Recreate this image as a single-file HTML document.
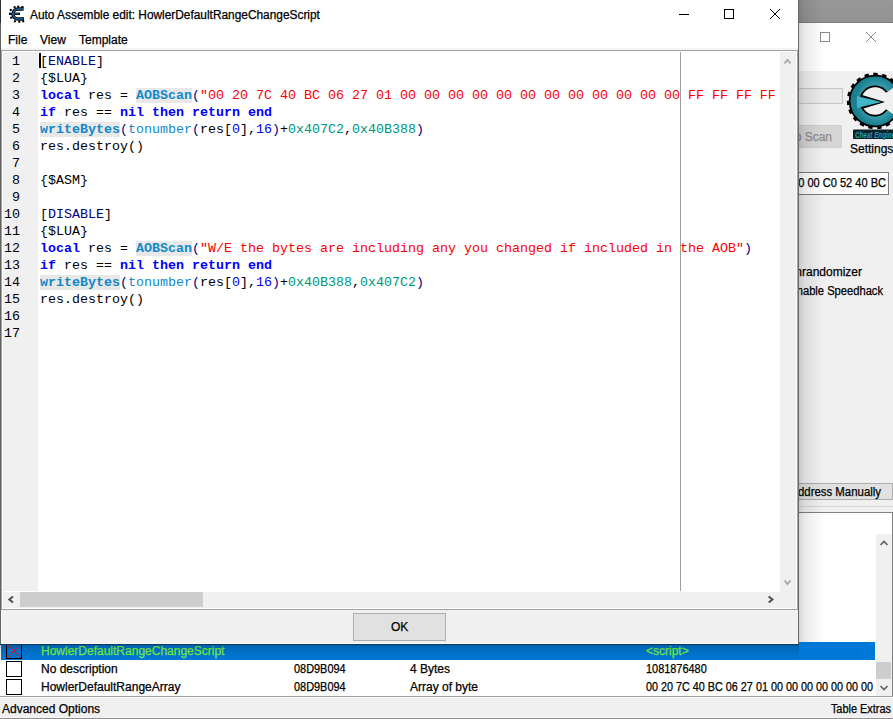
<!DOCTYPE html>
<html><head><meta charset="utf-8">
<style>
*{margin:0;padding:0;box-sizing:border-box}
html,body{width:893px;height:719px;overflow:hidden;background:#f0f0f0;position:relative}
body{font-family:"Liberation Sans",sans-serif;font-size:12px;color:#000}
.a{position:absolute}
.t{position:absolute;white-space:pre;line-height:14px;-webkit-text-stroke:.25px currentColor}
.m{position:absolute;font-family:"Liberation Mono",monospace;font-size:13.333px;white-space:pre;line-height:17px}
.kw{color:#0000ff;font-weight:bold}.nv{color:#000080}.fn{color:#1288c8;font-weight:bold;background:#e8e8e8}.st{color:#ff0000}.tn{color:#1288c8}.nu{color:#0000ff}.hx{color:#00967a}
</style></head><body>
<div class="a" style="left:798px;top:0px;width:95px;height:23px;background:linear-gradient(#989898,#939393);"></div>
<div class="a" style="left:798px;top:22px;width:95px;height:1px;background:#7c7c7c;"></div>
<div class="a" style="left:798px;top:23px;width:95px;height:48px;background:#fff;"></div>
<div class="a" style="left:798px;top:71px;width:95px;height:573px;background:#f0f0f0;"></div>
<div class="a" style="left:820px;top:32px;width:10px;height:10px;background:transparent;border:1px solid #8c8c8c"></div>
<svg class="a" style="left:865px;top:31px" width="12" height="12"><path d="M1 1L11 11M11 1L1 11" stroke="#8c8c8c" stroke-width="1"/></svg>
<div class="a" style="left:790px;top:88px;width:53px;height:16px;background:#eaeaea;border:1px solid #c6c6c6"></div>
<div class="a" style="left:790px;top:125px;width:52px;height:23px;background:#d6d6d6;border:1px solid #cfcfcf"></div>
<div class="t" style="left:632px;top:130px;width:200px;text-align:right;color:#8d8d8d">Undo Scan</div>
<svg class="a" style="left:843px;top:68px" width="50" height="75" viewBox="843 68 50 75"><defs><radialGradient id="lg" cx="0.6" cy="0.5" r="0.6"><stop offset="0" stop-color="#6fd0de"/><stop offset="1" stop-color="#1a7f8f"/></radialGradient></defs><g fill="none"><path d="M893 82.2A26 26 0 1 0 893 119.8" stroke="#000" stroke-width="4.4" stroke-dasharray="4.2 4.4"/><path d="M891 89A20 20 0 1 0 891 113" stroke="#000" stroke-width="12.5"/></g><path d="M857 93.5L885 102L857 110.5Z" fill="#000"/><path d="M891 89A20 20 0 1 0 891 113" fill="none" stroke="url(#lg)" stroke-width="9"/><path d="M857 96L881.5 102L857 108Z" fill="#3fb5c6"/><rect x="853" y="129.5" width="42" height="9.5" rx="1" fill="#0b2328"/><text x="855" y="137.5" font-family="Liberation Sans" font-size="9.5" font-weight="bold" font-style="italic" fill="#2a9cad" textLength="40" lengthAdjust="spacingAndGlyphs">Cheat Engine</text></svg>
<div class="t" style="left:850px;top:142px;">Settings</div>
<div class="a" style="left:780px;top:172px;width:109px;height:23px;background:#fff;border:1px solid #7a7a7a"></div>
<div class="t" style="left:686px;top:176px;width:200px;text-align:right;transform:scaleX(.92);transform-origin:100% 0">00 00 C0 52 40 BC</div>
<div class="t" style="left:662px;top:265px;width:200px;text-align:right">Unrandomizer</div>
<div class="t" style="left:683px;top:284px;width:200px;text-align:right;transform:scaleX(.93);transform-origin:100% 0">Enable Speedhack</div>
<div class="a" style="left:780px;top:483px;width:113px;height:17px;background:#e1e1e1;border:1px solid #adadad"></div>
<div class="t" style="left:681px;top:485px;width:200px;text-align:right;transform:scaleX(.95);transform-origin:100% 0">Add Address Manually</div>
<div class="a" style="left:798px;top:506px;width:95px;height:1px;background:#d8d8d8;"></div>
<div class="a" style="left:798px;top:512px;width:95px;height:1px;background:#828282;"></div>
<div class="a" style="left:798px;top:513px;width:94px;height:184px;background:#fff;"></div>
<div class="a" style="left:892px;top:513px;width:1px;height:184px;background:#828282;"></div>
<div class="a" style="left:876px;top:534px;width:16px;height:162px;background:#f0f0f0;"></div>
<div class="a" style="left:876px;top:662px;width:15px;height:17px;background:#cdcdcd;"></div>
<svg class="a" style="left:879px;top:539px" width="10" height="8"><path d="M1.5 6L5 2.5L8.5 6" stroke="#606060" stroke-width="1.6" fill="none"/></svg>
<svg class="a" style="left:879px;top:684px" width="10" height="8"><path d="M1.5 2L5 5.5L8.5 2" stroke="#606060" stroke-width="1.6" fill="none"/></svg>
<div class="a" style="left:0px;top:642px;width:876px;height:54px;background:#fff;"></div>
<div class="a" style="left:1px;top:642px;width:874px;height:18px;background:#0078d7;"></div>
<div class="a" style="left:0px;top:660px;width:876px;height:36px;background:#fff;"></div>
<div class="a" style="left:0px;top:696px;width:893px;height:1px;background:#a0a0a0;"></div>
<div class="a" style="left:0px;top:697px;width:893px;height:22px;background:#f0f0f0;"></div>
<div class="a" style="left:0px;top:697px;width:893px;height:1px;background:#fdfdfd;"></div>
<div class="a" style="left:0px;top:717px;width:893px;height:1px;background:#f6f6f6;"></div>
<div class="a" style="left:0px;top:718px;width:893px;height:1px;background:#8f8f8f;"></div>
<svg class="a" style="left:6px;top:643px" width="16" height="16"><rect x="0.5" y="0.5" width="15" height="15" fill="none" stroke="#000"/><path d="M1 1L15 15M15 1L1 15" stroke="#e81123" stroke-width="1"/></svg>
<div class="a" style="left:6px;top:661px;width:16px;height:16px;background:#fff;border:1px solid #000"></div>
<div class="a" style="left:6px;top:679px;width:16px;height:16px;background:#fff;border:1px solid #000"></div>
<div class="t" style="left:41px;top:644px;color:#7cf840">HowlerDefaultRangeChangeScript</div>
<div class="t" style="left:646px;top:644px;color:#7cf840">&lt;script&gt;</div>
<div class="t" style="left:41px;top:662px;">No description</div>
<div class="t" style="left:294px;top:662px;transform:scaleX(.91);transform-origin:0 0">08D9B094</div>
<div class="t" style="left:410px;top:662px;">4 Bytes</div>
<div class="t" style="left:646px;top:662px;transform:scaleX(.91);transform-origin:0 0">1081876480</div>
<div class="t" style="left:41px;top:680px;">HowlerDefaultRangeArray</div>
<div class="t" style="left:294px;top:680px;transform:scaleX(.91);transform-origin:0 0">08D9B094</div>
<div class="t" style="left:410px;top:680px;">Array of byte</div>
<div class="t" style="left:646px;top:680px;transform:scaleX(.9);transform-origin:0 0">00 20 7C 40 BC 06 27 01 00 00 00 00 00 00 00</div>
<div class="t" style="left:2px;top:702px;">Advanced Options</div>
<div class="t" style="left:691px;top:702px;width:200px;text-align:right;transform:scaleX(.91);transform-origin:100% 0">Table Extras</div>
<div class="a" style="left:799px;top:0px;width:26px;height:642px;background:linear-gradient(90deg,rgba(0,0,0,.17),rgba(0,0,0,.09) 5px,rgba(0,0,0,.05) 13px,rgba(0,0,0,0));"></div>
<div class="a" style="left:0px;top:645px;width:799px;height:15px;background:linear-gradient(rgba(0,0,0,.2),rgba(0,0,0,.1) 5px,rgba(0,0,0,.03) 12px,rgba(0,0,0,0));"></div>
<div class="a" style="left:0px;top:0px;width:799px;height:644px;background:#f0f0f0;"></div>
<div class="a" style="left:0px;top:0px;width:1px;height:23px;background:#303030;"></div>
<div class="a" style="left:0px;top:23px;width:1px;height:622px;background:#626262;"></div>
<div class="a" style="left:798px;top:0px;width:1px;height:645px;background:#6a6a6a;"></div>
<div class="a" style="left:1px;top:0px;width:797px;height:48px;background:#fff;"></div>
<div class="a" style="left:1px;top:48px;width:797px;height:2px;background:#f4f4f4;"></div>
<div class="a" style="left:1px;top:610px;width:1px;height:34px;background:#f8f8f8;"></div>
<div class="a" style="left:1px;top:643px;width:797px;height:1px;background:#fbfbfb;"></div>
<div class="a" style="left:0px;top:644px;width:799px;height:1px;background:#0b3a68;"></div>
<svg class="a" style="left:6px;top:3px" width="22" height="22" viewBox="6 3 22 22"><g fill="none"><path d="M23.6 9H18A5 5 0 0 0 18 19H24" stroke="#000" stroke-width="3.4"/><rect x="13.6" y="6.2" width="2" height="2" fill="#000"/><rect x="17.2" y="5.6" width="2" height="2" fill="#000"/><rect x="21.4" y="6.0" width="2" height="2" fill="#000"/><rect x="13.9" y="20.3" width="2" height="2" fill="#000"/><rect x="18.3" y="20.7" width="2" height="2" fill="#000"/><rect x="22.2" y="20.3" width="2" height="2" fill="#000"/><rect x="9.8" y="8.9" width="2" height="2" fill="#000"/><rect x="10.2" y="16.7" width="2" height="2" fill="#000"/><path d="M9 13.8H20" stroke="#000" stroke-width="2.3"/><path d="M23 9H18A5 5 0 0 0 18 19H23.4" stroke="#1a6aa8" stroke-width="1.3"/><path d="M10.3 13.8H19" stroke="#1a6aa8" stroke-width=".8"/></g></svg>
<div class="t" style="left:30px;top:8px;transform:scaleX(.99);transform-origin:0 0">Auto Assemble edit: HowlerDefaultRangeChangeScript</div>
<div class="a" style="left:679px;top:14px;width:10px;height:1px;background:#000;"></div>
<div class="a" style="left:724px;top:9px;width:10px;height:10px;background:transparent;border:1px solid #000"></div>
<svg class="a" style="left:769px;top:8px" width="12" height="12"><path d="M1 1L11 11M11 1L1 11" stroke="#000" stroke-width="1"/></svg>
<div class="t" style="left:8px;top:33px;">File</div>
<div class="t" style="left:40px;top:33px;">View</div>
<div class="t" style="left:79px;top:33px;">Template</div>
<div class="a" style="left:1px;top:50px;width:797px;height:560px;background:#fff;border:1px solid #a0a2a8"></div>
<div class="a" style="left:3px;top:52px;width:35px;height:539px;background:#f0f0f0;"></div>
<div class="a" style="left:680px;top:52px;width:1px;height:539px;background:#a0a0a0;"></div>
<div class="a" style="left:780px;top:52px;width:16px;height:540px;background:#f0f0f0;"></div>
<div class="a" style="left:3px;top:592px;width:793px;height:16px;background:#f0f0f0;"></div>
<div class="a" style="left:20px;top:592px;width:183px;height:15px;background:#cdcdcd;"></div>
<div class="a" style="left:353px;top:613px;width:93px;height:28px;background:#e1e1e1;border:1px solid #adadad"></div>
<div class="t" style="left:391px;top:620px;">OK</div>
<div class="m" style="left:40px;top:53px;color:#000">[<span class="nv">ENABLE</span>]
{$LUA}
<span class="kw">local</span> res = <span class="fn">AOBScan</span><span class="nv">(</span><span class="st">"00 20 7C 40 BC 06 27 01 00 00 00 00 00 00 00 00 00 00 00 00 FF FF FF FF</span>
<span class="kw">if</span> res == <span class="kw">nil</span> <span class="kw">then</span> <span class="kw">return</span> <span class="kw">end</span>
<span class="fn">writeBytes</span><span class="nv">(</span><span class="tn">tonumber</span><span class="nv">(</span>res[<span class="nu">0</span>],<span class="nu">16</span><span class="nv">)</span>+<span class="hx">0x407C2</span>,<span class="hx">0x40B388</span><span class="nv">)</span>
res.destroy()

{$ASM}

[<span class="nv">DISABLE</span>]
{$LUA}
<span class="kw">local</span> res = <span class="fn">AOBScan</span><span class="nv">(</span><span class="st">"W/E the bytes are including any you changed if included in the AOB"</span><span class="nv">)</span>
<span class="kw">if</span> res == <span class="kw">nil</span> <span class="kw">then</span> <span class="kw">return</span> <span class="kw">end</span>
<span class="fn">writeBytes</span><span class="nv">(</span><span class="tn">tonumber</span><span class="nv">(</span>res[<span class="nu">0</span>],<span class="nu">16</span><span class="nv">)</span>+<span class="hx">0x40B388</span>,<span class="hx">0x407C2</span><span class="nv">)</span>
res.destroy()

</div>
<div class="m" style="left:4px;top:53px;width:16px;text-align:right;color:#000">1
2
3
4
5
6
7
8
9
10
11
12
13
14
15
16
17</div>
<div class="a" style="left:39px;top:53px;width:2px;height:15px;background:#000;"></div>
<svg class="a" style="left:0;top:0" width="893" height="719" viewBox="0 0 893 719"><g fill="none" stroke-linecap="butt" stroke-linejoin="miter">
<path d="M784.5 63.5L787.5 60L790.5 63.5" stroke="#a6a6a6" stroke-width="1.8"/>
<path d="M784.5 580.5L787.5 584L790.5 580.5" stroke="#a6a6a6" stroke-width="1.8"/>
<path d="M13 596.5L9.3 599.5L13 602.5" stroke="#4f4f4f" stroke-width="2"/>
<path d="M768.7 596.5L772.4 599.5L768.7 602.5" stroke="#4f4f4f" stroke-width="2"/>
</g></svg>
</body></html>
